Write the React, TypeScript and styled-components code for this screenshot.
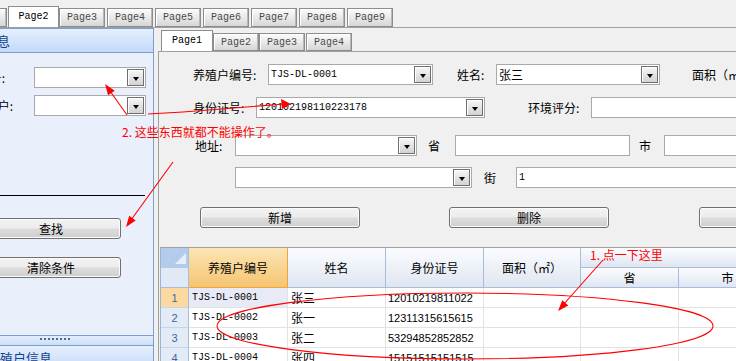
import React from 'react';
import styled, { createGlobalStyle } from 'styled-components';

const GlobalStyle = createGlobalStyle`
  html, body {
    margin: 0;
    padding: 0;
    background: #f0f0f0;
  }
  body {
    font-family: "Noto Sans CJK SC", "Noto Sans", sans-serif;
    font-size: 12px;
    color: #000;
  }
`;

const MONO = '"Liberation Mono", "DejaVu Sans Mono", monospace';

const Screen = styled.div`
  position: relative;
  width: 736px;
  height: 361px;
  overflow: hidden;
  background: #f0f0f0;
  display: flex;
  flex-direction: column;
`;

// ---- tabs ----
const TabStrip = styled.div<{ $h: number; $pl?: number }>`
  display: flex;
  align-items: flex-end;
  flex-shrink: 0;
  box-sizing: border-box;
  height: ${p => p.$h}px;
  padding-left: ${p => p.$pl ?? 0}px;
  border-bottom: 1px solid #a0a0a0;
  overflow: hidden;
`;

const Tab = styled.div<{ $active?: boolean; $w: number; $ml?: number; $h: number }>`
  box-sizing: border-box;
  flex-shrink: 0;
  width: ${p => p.$w}px;
  height: ${p => p.$h}px;
  margin-left: ${p => p.$ml ?? 0}px;
  margin-bottom: ${p => (p.$active ? -1 : 0)}px;
  display: flex;
  align-items: center;
  justify-content: center;
  padding-bottom: ${p => (p.$active ? 2 : 0)}px;
  font-family: ${MONO};
  font-size: 10px;
  color: ${p => (p.$active ? '#000' : '#4a4a4a')};
  border: 1px solid #8d8d8d;
  border-bottom: ${p => (p.$active ? 'none' : '1px solid #8d8d8d')};
  background: ${p => (p.$active ? '#fff' : 'linear-gradient(#fbfbfb, #e6e6e6 60%, #d6d6d6)')};
  box-shadow: ${p => (p.$active ? 'none' : 'inset -1px 0 0 #b8b8b8, inset 1px 1px 0 #fff')};
`;

const Main = styled.div`
  display: flex;
  flex: 1;
  min-height: 0;
`;

// ---- left side panel ----
const SidePanel = styled.div`
  width: 154px;
  flex-shrink: 0;
  box-sizing: border-box;
  border-right: 1px solid #7a9ed2;
  display: flex;
  flex-direction: column;
  overflow: hidden;
`;

const SideHeader = styled.div`
  height: 25px;
  flex-shrink: 0;
  box-sizing: border-box;
  border-top: 1px solid #7a9ed2;
  border-bottom: 1px solid #7a9ed2;
  background: linear-gradient(#e6f0fd, #c3d9f9);
  color: #15428b;
  font-size: 13px;
  display: flex;
  align-items: center;
  white-space: nowrap;
  overflow: hidden;
`;

const HeaderText = styled.span<{ $shift: number }>`
  flex-shrink: 0;
  margin-left: ${p => p.$shift}px;
`;

const SideBody = styled.div`
  height: 282px;
  flex-shrink: 0;
  box-sizing: border-box;
  background: #e9f0fb;
  padding-top: 14px;
  display: flex;
  flex-direction: column;
`;

const SideRows = styled.div`
  display: flex;
  flex-direction: column;
  gap: 7px;
`;

const SideRow = styled.div`
  display: flex;
  align-items: center;
  height: 21px;
`;

const SideLabel = styled.div<{ $w: number }>`
  width: ${p => p.$w}px;
  margin-right: ${p => 34 - p.$w}px;
  flex-shrink: 0;
  display: flex;
  justify-content: flex-end;
  overflow: hidden;
  white-space: nowrap;
`;

const Divider = styled.div`
  margin-top: 79px;
  width: 145px;
  height: 1px;
  background: #000;
`;

const Splitter = styled.div`
  height: 10px;
  flex-shrink: 0;
  box-sizing: border-box;
  border-top: 1px solid #7a9ed2;
  background: linear-gradient(#e4edf9, #cddff6);
  display: flex;
  padding: 2px 0 0 40px;
`;

const Grip = styled.div`
  width: 31px;
  height: 2px;
  background: repeating-linear-gradient(to right, #4d6c97 0 2px, transparent 2px 4px);
`;

// ---- controls ----
const Field = styled.div<{ $w: number; $ml?: number }>`
  box-sizing: border-box;
  flex-shrink: 0;
  width: ${p => p.$w}px;
  margin-left: ${p => p.$ml ?? 0}px;
  height: 21px;
  border: 1px solid #a9a9a9;
  background: #fff;
  display: flex;
  align-items: center;
  padding: 0 1px 0 2px;
`;

const FieldText = styled.span<{ $mono?: boolean }>`
  flex: 1;
  overflow: hidden;
  white-space: nowrap;
  font-family: ${p => (p.$mono ? MONO : 'inherit')};
  font-size: ${p => (p.$mono ? 10 : 12)}px;
`;

const DropButton = styled.div`
  box-sizing: border-box;
  width: 17px;
  height: 17px;
  flex-shrink: 0;
  border: 1px solid #6f6f6f;
  box-shadow: inset 1px 1px 0 #fff;
  background: linear-gradient(#f7f7f7, #e4e4e4 50%, #d3d3d3);
  display: flex;
  align-items: center;
  justify-content: center;
  padding-top: 3px;
`;

const Caret = styled.div`
  width: 0;
  height: 0;
  border-left: 3.5px solid transparent;
  border-right: 3.5px solid transparent;
  border-top: 4px solid #000;
`;

const Button = styled.div<{ $w: number; $ml?: number }>`
  box-sizing: border-box;
  flex-shrink: 0;
  width: ${p => p.$w}px;
  margin-left: ${p => p.$ml ?? 0}px;
  height: 21px;
  border: 1px solid #707070;
  border-radius: 3px;
  box-shadow: inset 0 0 0 1px #fbfbfb;
  background: linear-gradient(#f3f3f3, #ececec 48%, #dcdcdc 52%, #cfcfcf);
  display: flex;
  align-items: center;
  justify-content: center;
  font-size: 12px;
`;

const SideButton = styled(Button)<{ $mt: number }>`
  margin-left: -19px;
  margin-top: ${p => p.$mt}px;
`;

interface ComboProps {
  w: number;
  ml?: number;
  value?: string;
  mono?: boolean;
}

const Combo: React.FC<ComboProps> = ({ w, ml, value, mono }) => (
  <Field $w={w} $ml={ml}>
    <FieldText $mono={mono}>{value}</FieldText>
    <DropButton>
      <Caret />
    </DropButton>
  </Field>
);

const TextBox: React.FC<ComboProps> = ({ w, ml, value, mono }) => (
  <Field $w={w} $ml={ml}>
    <FieldText $mono={mono}>{value}</FieldText>
  </Field>
);

// ---- right panel ----
const RightPanel = styled.div`
  flex: 1;
  min-width: 0;
  margin-left: 4px;
  display: flex;
  flex-direction: column;
  overflow: hidden;
`;

const Workspace = styled.div`
  flex: 1;
  border-left: 1px solid #a0a0a0;
  display: flex;
  flex-direction: column;
  overflow: hidden;
`;

const FormRow = styled.div<{ $mt: number; $pl: number }>`
  display: flex;
  align-items: center;
  height: 21px;
  flex-shrink: 0;
  margin-top: ${p => p.$mt}px;
  padding-left: ${p => p.$pl}px;
  white-space: nowrap;
`;

const Label = styled.div<{ $w: number; $ml?: number }>`
  width: ${p => p.$w}px;
  margin-left: ${p => p.$ml ?? 0}px;
  flex-shrink: 0;
  font-size: 12px;
  white-space: nowrap;
`;

// ---- data grid ----
const COLS = '28px 99px 98px 98px 97px 98px 98px';

const Grid = styled.div`
  margin: 19px 0 0 1px;
  border-top: 1px solid #a0a0a0;
  border-left: 1px solid #9cb4d6;
  background: #fff;
  flex-shrink: 0;
  width: 620px;
`;

const GridHead = styled.div`
  display: grid;
  grid-template-columns: ${COLS};
  grid-template-rows: 20px 20px;
`;

const HeadCell = styled.div<{ $rows?: number; $cols?: number; $hot?: boolean }>`
  box-sizing: border-box;
  grid-row: span ${p => p.$rows ?? 1};
  grid-column: span ${p => p.$cols ?? 1};
  border-right: 1px solid ${p => (p.$hot ? '#f0a43c' : '#a7bdd9')};
  border-bottom: 1px solid ${p => (p.$hot ? '#f0a43c' : '#a7bdd9')};
  background: ${p =>
    p.$hot ? 'linear-gradient(#fde5b3, #f5c572)' : 'linear-gradient(#fbfcfe, #dfe6f1)'};
  display: flex;
  align-items: center;
  justify-content: center;
  font-size: 12px;
`;

const Corner = styled.div`
  box-sizing: border-box;
  grid-row: span 2;
  border-right: 1px solid #a7bdd9;
  border-bottom: 1px solid #a7bdd9;
  background: linear-gradient(#b4ccec 0 20px, #e1e9f6 20px);
  display: flex;
  justify-content: flex-end;
  padding: 5px 2px 0 0;
`;

const CornerMark = styled.div`
  width: 0;
  height: 0;
  border-left: 11px solid transparent;
  border-bottom: 11px solid #e9eef6;
`;

const GridRow = styled.div`
  display: grid;
  grid-template-columns: ${COLS};
  height: 20px;
`;

const RowNum = styled.div<{ $hot?: boolean }>`
  box-sizing: border-box;
  border-right: 1px solid #a7bdd9;
  border-bottom: 1px solid #c5d5ea;
  background: ${p => (p.$hot ? '#fbd9a0' : '#e3ebf6')};
  color: #3a68a8;
  font-family: "Liberation Sans", sans-serif;
  font-size: 11px;
  display: flex;
  align-items: center;
  justify-content: center;
`;

const Cell = styled.div<{ $mono?: boolean; $num?: boolean; $hot?: boolean }>`
  box-sizing: border-box;
  border-right: 1px solid #e2e2e2;
  border-bottom: 1px solid #e2e2e2;
  background: ${p => (p.$hot ? '#e8eaf6' : '#fff')};
  display: flex;
  align-items: center;
  padding-left: ${p => (p.$num ? 2 : 3)}px;
  white-space: nowrap;
  overflow: hidden;
  font-family: ${p => (p.$mono ? MONO : p.$num ? '"Liberation Sans", sans-serif' : 'inherit')};
  font-size: ${p => (p.$mono ? 10 : p.$num ? 11 : 12)}px;
`;

// ---- red annotations ----
const Marks = styled.svg`
  position: absolute;
  left: 0;
  top: 0;
  pointer-events: none;
`;

const Note = styled.div<{ $x: number; $y: number }>`
  position: absolute;
  left: ${p => p.$x}px;
  top: ${p => p.$y}px;
  color: #ff0000;
  font-size: 12px;
  line-height: 14px;
  white-space: nowrap;
  pointer-events: none;
`;

const rows = [
  { n: 1, code: 'TJS-DL-0001', name: '张三', id: '12010219811022' },
  { n: 2, code: 'TJS-DL-0002', name: '张一', id: '12311315615615' },
  { n: 3, code: 'TJS-DL-0003', name: '张二', id: '53294852852852' },
  { n: 4, code: 'TJS-DL-0004', name: '张四', id: '15151515151515' },
];

const topTabs = ['Page3', 'Page4', 'Page5', 'Page6', 'Page7', 'Page8', 'Page9'];

export default function App() {
  return (
    <>
      <GlobalStyle />
      <Screen>
        <TabStrip $h={28}>
          <Tab $w={46} $ml={-39} $h={19} />
          <Tab $w={51} $ml={1} $h={22} $active>Page2</Tab>
          {topTabs.map((t, i) => (
            <Tab key={t} $w={46} $ml={i === 0 ? 0 : 2} $h={19}>{t}</Tab>
          ))}
        </TabStrip>

        <Main>
          <SidePanel>
            <SideHeader>
              <HeaderText $shift={-68}>查询条件信息</HeaderText>
            </SideHeader>
            <SideBody>
              <SideRows>
                <SideRow>
                  <SideLabel $w={5}>养殖户编号:</SideLabel>
                  <Combo w={112} />
                </SideRow>
                <SideRow>
                  <SideLabel $w={13}>养殖户:</SideLabel>
                  <Combo w={112} />
                </SideRow>
              </SideRows>
              <Divider />
              <SideButton $w={140} $mt={22}>查找</SideButton>
              <SideButton $w={140} $mt={18}>清除条件</SideButton>
            </SideBody>
            <Splitter>
              <Grip />
            </Splitter>
            <SideHeader>
              <HeaderText $shift={-13}>养殖户信息</HeaderText>
            </SideHeader>
          </SidePanel>

          <RightPanel>
            <TabStrip $h={24} $pl={3}>
              <Tab $w={52} $h={22} $active>Page1</Tab>
              <Tab $w={46} $h={18}>Page2</Tab>
              <Tab $w={46} $h={18}>Page3</Tab>
              <Tab $w={46} $ml={1} $h={18}>Page4</Tab>
            </TabStrip>

            <Workspace>
              <FormRow $mt={12} $pl={34}>
                <Label $w={75}>养殖户编号:</Label>
                <Combo w={165} value="TJS-DL-0001" mono />
                <Label $w={39} $ml={24}>姓名:</Label>
                <Combo w={164} value="张三" />
                <Label $w={80} $ml={32}>面积（㎡）:</Label>
              </FormRow>

              <FormRow $mt={12} $pl={34}>
                <Label $w={63}>身份证号:</Label>
                <Combo w={229} value="120102198110223178" mono />
                <Label $w={63} $ml={43}>环境评分:</Label>
                <TextBox w={200} />
              </FormRow>

              <FormRow $mt={17} $pl={36}>
                <Label $w={40}>地址:</Label>
                <Combo w={182} />
                <Label $w={27} $ml={11}>省</Label>
                <TextBox w={175} />
                <Label $w={25} $ml={9}>市</Label>
                <TextBox w={120} />
              </FormRow>

              <FormRow $mt={11} $pl={76}>
                <Combo w={237} />
                <Label $w={32} $ml={12}>街</Label>
                <TextBox w={240} value="1" mono />
              </FormRow>

              <FormRow $mt={19} $pl={41}>
                <Button $w={160}>新增</Button>
                <Button $w={160} $ml={89}>删除</Button>
                <Button $w={160} $ml={90}>修改</Button>
              </FormRow>

              <Grid>
                <GridHead>
                  <Corner>
                    <CornerMark />
                  </Corner>
                  <HeadCell $rows={2} $hot>养殖户编号</HeadCell>
                  <HeadCell $rows={2}>姓名</HeadCell>
                  <HeadCell $rows={2}>身份证号</HeadCell>
                  <HeadCell $rows={2}>面积（㎡）</HeadCell>
                  <HeadCell $cols={2} />
                  <HeadCell>省</HeadCell>
                  <HeadCell>市</HeadCell>
                </GridHead>
                {rows.map(r => (
                  <GridRow key={r.n}>
                    <RowNum $hot={r.n === 1}>{r.n}</RowNum>
                    <Cell $mono $hot={r.n === 1}>{r.code}</Cell>
                    <Cell>{r.name}</Cell>
                    <Cell $num>{r.id}</Cell>
                    <Cell />
                    <Cell />
                    <Cell />
                  </GridRow>
                ))}
              </Grid>
            </Workspace>
          </RightPanel>
        </Main>

        <Marks width={736} height={361} viewBox="0 0 736 361">
          <g stroke="#ff0000" strokeWidth={1.1} fill="none">
            <ellipse cx={465} cy={326} rx={248} ry={33} />
            <line x1={127} y1={115} x2={110} y2={91} />
            <polyline points="148,114 183,112 284,104" />
            <line x1={173} y1={162} x2={131} y2={220} />
            <line x1={603} y1={260} x2={563} y2={305} />
          </g>
          <g fill="#ff0000">
            <polygon points="105,84 114.7,90.7 108.1,95.3" />
            <polygon points="291,104 281,99 282,109" />
            <polygon points="126,227 135.7,220.4 129.2,215.8" />
            <polygon points="558,311 568.3,305.4 562.3,300.2" />
          </g>
        </Marks>
        <Note $x={122} $y={125}>2. 这些东西就都不能操作了。</Note>
        <Note $x={590} $y={248}>1. 点一下这里</Note>
      </Screen>
    </>
  );
}
